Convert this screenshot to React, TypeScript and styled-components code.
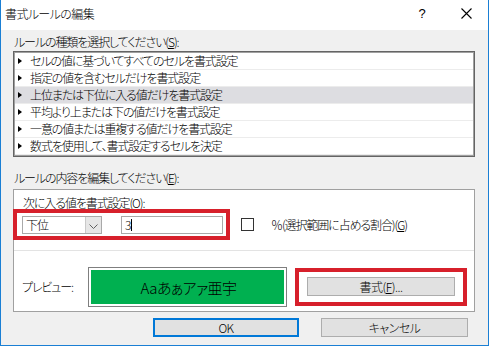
import styled, { createGlobalStyle } from "styled-components";

const GlobalStyle = createGlobalStyle`
  html, body {
    margin: 0;
    padding: 0;
    background: #ffffff;
  }
  body {
    font-family: "Noto Sans CJK JP", "Noto Sans", sans-serif;
    font-size: 12px;
    font-weight: 300;
    letter-spacing: -1.1px;
    font-feature-settings: "palt";
    color: #000;
  }
`

const ruleTypes = [
    'セルの値に基づいてすべてのセルを書式設定',
    '指定の値を含むセルだけを書式設定',
    '上位または下位に入る値だけを書式設定',
    '平均より上または下の値だけを書式設定',
    '一意の値または重複する値だけを書式設定',
    '数式を使用して、書式設定するセルを決定',
]

const selectedRule = 2

export default function App()
{
    return (
        <Window>
            <GlobalStyle/>

            <TitleBar>
                <Title>書式ルールの編集</Title>
                <CaptionButton>?</CaptionButton>
                <CaptionButton>
                    <svg width="11" height="11" viewBox="0 0 11 11">
                        <path d="M0.5 0.5 L10.5 10.5 M10.5 0.5 L0.5 10.5" stroke="#000" strokeWidth="1.1" fill="none"/>
                    </svg>
                </CaptionButton>
            </TitleBar>

            <Body>
                <Label>ルールの種類を選択してください(<u>S</u>):</Label>

                <ListBox>
                    {ruleTypes.map((rule, i) => (
                        <ListRow key={rule} $selected={i === selectedRule}>
                            <Arrow/>
                            <span>{rule}</span>
                        </ListRow>
                    ))}
                </ListBox>

                <Label $top={13}>ルールの内容を編集してください(<u>E</u>):</Label>

                <GroupBox>
                    <Section>
                        <Label>次に入る値を書式設定(<u>O</u>):</Label>
                        <ValueRow>
                            <Highlight $pad="3px 3px 2px 5px" $shift={-9}>
                                <Select>
                                    <SelectText>下位</SelectText>
                                    <SelectButton>
                                        <svg width="9" height="5" viewBox="0 0 9 5">
                                            <polyline points="0.5,0.5 4.5,4.5 8.5,0.5" stroke="#606060" strokeWidth="1" fill="none"/>
                                        </svg>
                                    </SelectButton>
                                </Select>
                                <TextInput>3<Caret/></TextInput>
                            </Highlight>
                            <Checkbox/>
                            <CheckLabel>％(選択範囲に占める割合)(<u>G</u>)</CheckLabel>
                        </ValueRow>
                    </Section>

                    <Divider/>

                    <PreviewRow>
                        <PreviewLabel>プレビュー:</PreviewLabel>
                        <PreviewFrame>
                            <PreviewFill>Aaあぁアァ亜宇</PreviewFill>
                        </PreviewFrame>
                        <Highlight $pad="5px 8px 6px 8px" $shift={8}>
                            <Button $w={148}>書式(<u>F</u>)...</Button>
                        </Highlight>
                    </PreviewRow>
                </GroupBox>

                <ButtonRow>
                    <Button $w={146} $default>OK</Button>
                    <Button $w={147}>キャンセル</Button>
                </ButtonRow>
            </Body>
        </Window>
    )
}


const Window = styled.div`
  width: 489px;
  height: 346px;
  box-sizing: border-box;
  border: 1px solid #1a7fd4;
  border-top: none;
  background: #f0f0f0;
  display: flex;
  flex-direction: column;
`

const TitleBar = styled.div`
  height: 30px;
  background: #ffffff;
  display: flex;
  align-items: center;
  padding-left: 4px;
`

const Title = styled.div`
  flex: 1;
  line-height: 16px;
  margin-top: -3px;
  letter-spacing: -0.6px;
`

const CaptionButton = styled.div`
  width: 44px;
  height: 30px;
  display: flex;
  justify-content: center;
  align-items: center;
  font-family: "Liberation Sans", sans-serif;
  font-size: 13px;
  letter-spacing: 0;
  margin-top: -4px;
`

const Body = styled.div`
  flex: 1;
  display: flex;
  flex-direction: column;
  padding: 4px 13px 0 12px;
`

const Label = styled.div<{ $top?: number }>`
  height: 16px;
  line-height: 16px;
  padding-left: 1px;
  margin-top: ${p => p.$top ?? 0}px;
  white-space: nowrap;
`

const ListBox = styled.div`
  margin-top: 1px;
  height: 106px;
  box-sizing: border-box;
  border: 1px solid #646464;
  box-shadow: inset 0 0 0 1px #a0a0a0;
  background: #ffffff;
  padding: 1px;
`

const ListRow = styled.div<{ $selected?: boolean }>`
  height: 17px;
  box-sizing: border-box;
  display: flex;
  align-items: center;
  gap: 8px;
  padding-left: 3px;
  border-bottom: 1px solid #ececec;
  background: ${p => p.$selected ? '#dddde1' : 'transparent'};
  line-height: 16px;
  white-space: nowrap;
`

const Arrow = styled.span`
  width: 0;
  height: 0;
  border-left: 4px solid #000;
  border-top: 3px solid transparent;
  border-bottom: 3px solid transparent;
`

const GroupBox = styled.div`
  margin-top: 3px;
  border: 1px solid #a0a0a0;
  background: #ffffff;
  display: flex;
  flex-direction: column;
`

const Section = styled.div`
  padding: 5px 8px 0 8px;
  display: flex;
  flex-direction: column;
`

const ValueRow = styled.div`
  margin-top: -2px;
  display: flex;
  align-items: center;
`

const Highlight = styled.div<{ $pad: string, $shift: number }>`
  border: 4px solid #d7202b;
  padding: ${p => p.$pad};
  margin-left: ${p => p.$shift}px;
  display: flex;
  align-items: center;
  gap: 19px;
`

const Select = styled.div`
  width: 80px;
  height: 18px;
  box-sizing: border-box;
  border: 1px solid #a9a9a9;
  background: #ffffff;
  display: flex;
  align-items: stretch;
`

const SelectText = styled.div`
  flex: 1;
  padding-left: 3px;
  line-height: 16px;
`

const SelectButton = styled.div`
  width: 16px;
  background: #e6e6e6;
  border-left: 1px solid #c9c9c9;
  display: flex;
  justify-content: center;
  align-items: center;
  padding-top: 2px;
  box-sizing: border-box;
`

const TextInput = styled.div`
  width: 102px;
  height: 18px;
  box-sizing: border-box;
  border: 1px solid #a9a9a9;
  background: #ffffff;
  padding-left: 3px;
  line-height: 16px;
  display: flex;
  align-items: center;
  gap: 1px;
`

const Caret = styled.span`
  width: 1px;
  height: 12px;
  background: #000;
`

const Checkbox = styled.div`
  width: 13px;
  height: 13px;
  box-sizing: border-box;
  border: 1px solid #333333;
  background: #ffffff;
  margin-left: 11px;
`

const CheckLabel = styled.div`
  margin-left: 17px;
  line-height: 16px;
  white-space: nowrap;
`

const Divider = styled.div`
  margin-top: 10px;
  height: 1px;
  background: #e3e3e3;
`

const PreviewRow = styled.div`
  padding: 16px 0 4px 8px;
  display: flex;
  align-items: center;
`

const PreviewLabel = styled.div`
  width: 66px;
  line-height: 16px;
`

const PreviewFrame = styled.div`
  width: 199px;
  height: 40px;
  box-sizing: border-box;
  border: 1px solid #7f7f7f;
  padding: 2px;
  background: #ffffff;
  display: flex;
`

const PreviewFill = styled.div`
  flex: 1;
  background: #00b050;
  display: flex;
  justify-content: center;
  align-items: center;
  font-size: 15px;
  letter-spacing: -0.6px;
  padding-left: 2px;
`

const Button = styled.div<{ $w: number, $default?: boolean }>`
  width: ${p => p.$w}px;
  height: 19px;
  box-sizing: border-box;
  background: #e1e1e1;
  border: 1px solid ${p => p.$default ? '#0078d7' : '#adadad'};
  box-shadow: ${p => p.$default ? 'inset 0 0 0 1px #0078d7' : 'none'};
  display: flex;
  justify-content: center;
  align-items: center;
  line-height: 16px;
  letter-spacing: -0.5px;
`

const ButtonRow = styled.div`
  margin-top: 6px;
  display: flex;
  justify-content: flex-end;
  gap: 22px;
  padding-right: 7px;
`
